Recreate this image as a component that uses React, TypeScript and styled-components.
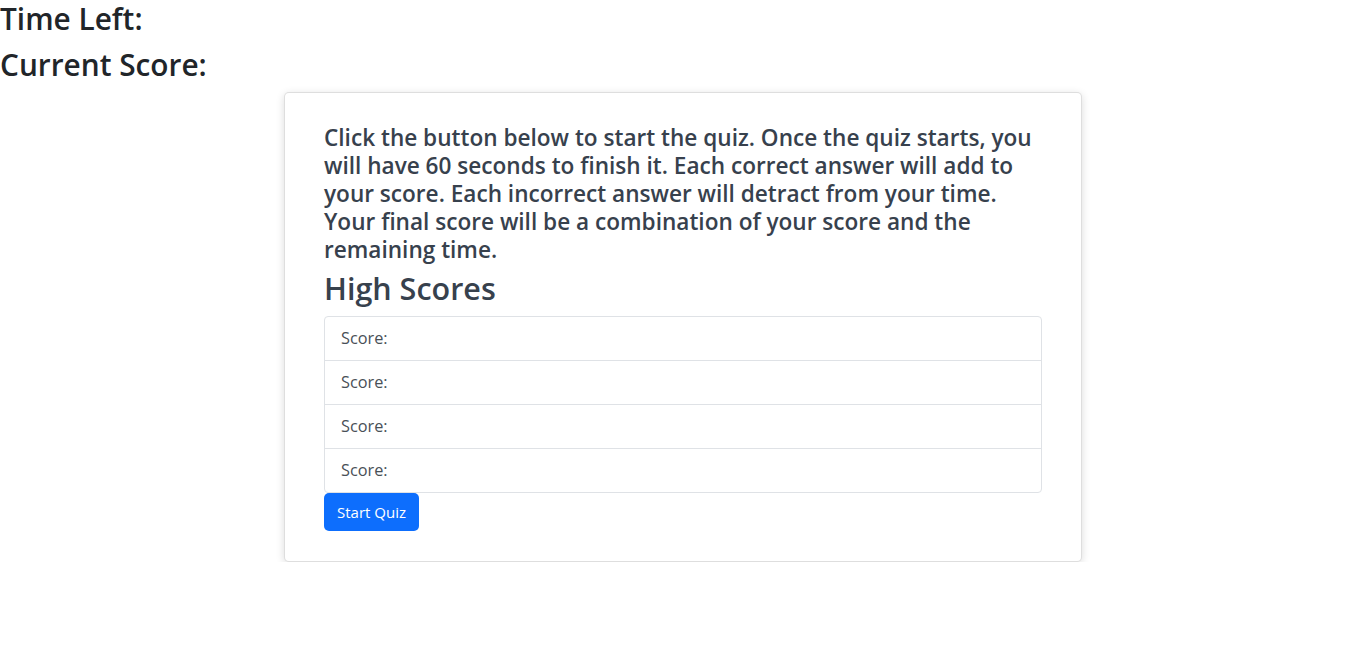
import React from "react";
import styled, { createGlobalStyle } from "styled-components";

const Global = createGlobalStyle`
  html, body { margin: 0; padding: 0; background: #fff; }
  body {
    font-family: "Open Sans", "Noto Sans", Arial, sans-serif;
    color: #212529;
    font-size: 16px;
    line-height: 1.5;
  }
  * { box-sizing: border-box; }
`;

const Page = styled.div`
  display: flex;
  flex-direction: column;
`;

const Stat = styled.h2`
  margin: 0 0 8px;
  font-size: 29.8px;
  font-weight: 600;
  line-height: 38px;
  color: #212529;
`;

const Card = styled.section`
  align-self: center;
  width: 798px;
  border: 1px solid rgba(0, 0, 0, 0.13);
  border-radius: 5px;
  box-shadow: 0 2px 8px rgba(0, 0, 0, 0.14);
  padding: 31px 39px 30px;
  background: #fff;
  display: flex;
  flex-direction: column;
`;

const Intro = styled.p`
  margin: 0 0 4px;
  font-size: 22.6px;
  font-weight: 600;
  line-height: 28px;
  color: #37414d;
`;

const Title = styled.h2`
  margin: 0 0 8px;
  font-size: 30.5px;
  font-weight: 600;
  line-height: 40px;
  color: #37414d;
`;

const List = styled.ul`
  margin: 0;
  padding: 0;
  list-style: none;
  border: 1px solid #dfe2e6;
  border-radius: 4px;
`;

const Item = styled.li`
  padding: 0 16px;
  line-height: 43px;
  font-size: 16.3px;
  color: #495057;
  & + & { border-top: 1px solid #dfe2e6; }
`;

const Button = styled.button`
  align-self: flex-start;
  height: 38px;
  padding: 0 13px;
  border: none;
  border-radius: 5px;
  background: #0d6efd;
  color: #fff;
  font-family: inherit;
  font-size: 15px;
  cursor: pointer;
`;

export default function App() {
  return (
    <Page>
      <Global />
      <Stat>Time Left:</Stat>
      <Stat>Current Score:</Stat>
      <Card>
        <Intro>
          Click the button below to start the quiz. Once the quiz starts, you will have 60 seconds to finish it. Each
          correct answer will add to your score. Each incorrect answer will detract from your time. Your final score will
          be a combination of your score and the remaining time.
        </Intro>
        <Title>High Scores</Title>
        <List>
          {[0, 1, 2, 3].map((i) => (
            <Item key={i}>Score:</Item>
          ))}
        </List>
        <Button>Start Quiz</Button>
      </Card>
    </Page>
  );
}
